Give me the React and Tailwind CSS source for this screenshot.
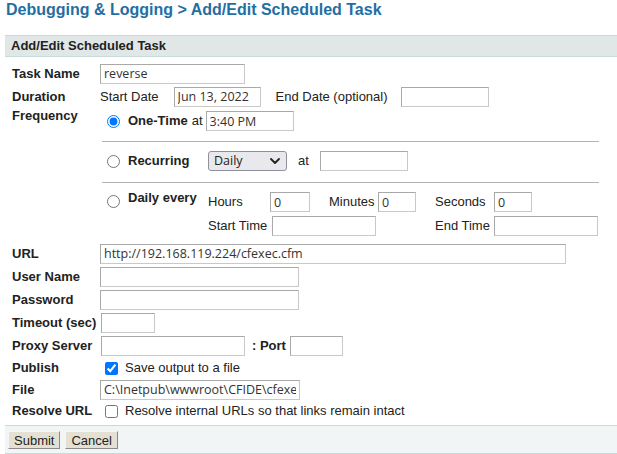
import React from 'react';

// Scheduled task editor form (ColdFusion admin style)
const Label = ({ children }) => (
  <div className="w-[95px] shrink-0 pl-[7px] font-bold text-[#222]">{children}</div>
);

const Field = ({ w, value = '', className = '' }) => (
  <input
    readOnly
    value={value}
    className={`h-[20px] ${w} shrink-0 border border-[#a9a9a9] border-r-[#c9c9c9] border-b-[#c9c9c9] bg-white px-[3px] font-['Open_Sans',sans-serif] text-[12.5px] text-[#333] outline-none ${className}`}
  />
);

const Radio = ({ checked = false }) => (
  <input type="radio" name="freq" defaultChecked={checked} className="mt-[1px] ml-[7px] h-[13px] w-[13px] shrink-0" />
);

const Row = ({ h = 'h-[23px]', children }) => (
  <div className={`flex ${h} items-center`}>{children}</div>
);

const Chevron = () => (
  <svg width="10" height="6" viewBox="0 0 10 6" fill="none">
    <path d="M1 1 L5 5 L9 1" stroke="#222" strokeWidth="1.8" strokeLinecap="round" strokeLinejoin="round" />
  </svg>
);

const App = () => {
  return (
    <div className="h-[454px] w-[617px] overflow-hidden bg-white font-['Liberation_Sans',Arial,sans-serif] text-[13px] text-[#222]">
      <h1 className="pl-[6px] text-[16px] leading-[20px] font-bold text-[#1f6fa3]">
        Debugging &amp; Logging &gt; Add/Edit Scheduled Task
      </h1>

      {/* Section header */}
      <div className="mt-[15px] ml-[5px] flex h-[22px] items-center border-y border-[#c4dbd7] bg-[#e1e6e6] pl-[6px] font-bold">
        Add/Edit Scheduled Task
      </div>

      <div className="ml-[5px] pt-[5px]">
        <Row>
          <Label>Task Name</Label>
          <Field w="w-[145px]" value="reverse" />
        </Row>

        <Row>
          <Label>Duration</Label>
          <span>Start Date</span>
          <Field w="w-[87px]" value="Jun 13, 2022" className="ml-[15px]" />
          <span className="ml-[15px]">End Date (optional)</span>
          <Field w="w-[88px]" className="ml-[13px]" />
        </Row>

        {/* Frequency block */}
        <div className="flex h-[134px]">
          <div className="w-[95px] shrink-0 pl-[7px] leading-[16px] font-bold">Frequency</div>
          <div className="w-[500px] pt-[2px]">
            <div className="flex h-[22px] items-center">
              <Radio checked />
              <span className="ml-[8px] font-bold">One-Time</span>
              <span className="ml-[4px]">at</span>
              <Field w="w-[88px]" value="3:40 PM" className="ml-[3px]" />
            </div>

            <div className="mt-[9px] ml-[2px] w-[497px] border-t border-[#b3b3b3]" />

            <div className="mt-[8px] flex h-[22px] items-center">
              <div className="flex w-[108px] shrink-0 items-center">
                <Radio />
                <span className="ml-[8px] font-bold">Recurring</span>
              </div>
              <div className="flex h-[20px] w-[79px] items-center justify-between rounded-[3px] border border-[#8f8f9d] bg-[#e9e9ed] pr-[6px] pl-[5px] font-['Open_Sans',sans-serif] text-[12.5px] text-[#222]">
                <span>Daily</span>
                <Chevron />
              </div>
              <span className="ml-[11px]">at</span>
              <Field w="w-[88px]" className="ml-[11px]" />
            </div>

            <div className="mt-[10px] ml-[2px] w-[497px] border-t border-[#b3b3b3]" />

            <div className="mt-[8px] flex">
              <div className="flex w-[108px] shrink-0 items-start">
                <input type="radio" name="freq" className="mt-[4px] ml-[7px] h-[13px] w-[13px] shrink-0" />
                <span className="ml-[8px] leading-[14px] font-bold">Daily every</span>
              </div>
              <div>
                <div className="flex h-[22px] items-center">
                  <span className="w-[62px] shrink-0">Hours</span>
                  <Field w="w-[40px]" value="0" />
                  <span className="ml-[19px] w-[49px] shrink-0">Minutes</span>
                  <Field w="w-[38px]" value="0" />
                  <span className="ml-[19px] w-[59px] shrink-0">Seconds</span>
                  <Field w="w-[38px]" value="0" />
                </div>
                <div className="mt-[2px] flex h-[22px] items-center">
                  <span className="w-[64px] shrink-0">Start Time</span>
                  <Field w="w-[104px]" />
                  <span className="ml-[59px] w-[59px] shrink-0">End Time</span>
                  <Field w="w-[104px]" />
                </div>
              </div>
            </div>
          </div>
        </div>

        <Row>
          <Label>URL</Label>
          <Field w="w-[466px]" value="http://192.168.119.224/cfexec.cfm" />
        </Row>
        <Row>
          <Label>User Name</Label>
          <Field w="w-[199px]" />
        </Row>
        <Row>
          <Label>Password</Label>
          <Field w="w-[199px]" />
        </Row>
        <Row>
          <Label>Timeout (sec)</Label>
          <Field w="w-[54px]" className="ml-[1px]" />
        </Row>
        <Row>
          <Label>Proxy Server</Label>
          <Field w="w-[144px]" className="ml-[1px]" />
          <span className="ml-[7px] font-bold">: Port</span>
          <Field w="w-[53px]" className="ml-[4px]" />
        </Row>
        <Row h="h-[22px]">
          <Label>Publish</Label>
          <input type="checkbox" defaultChecked className="ml-[5px] h-[13px] w-[13px] shrink-0" />
          <span className="ml-[7px]">Save output to a file</span>
        </Row>
        <Row h="h-[21px]">
          <Label>File</Label>
          <Field w="w-[200px]" value="C:\Inetpub\wwwroot\CFIDE\cfexec.htm" />
        </Row>
        <Row h="h-[22px]">
          <Label>Resolve URL</Label>
          <input type="checkbox" className="ml-[5px] h-[13px] w-[13px] shrink-0" />
          <span className="ml-[7px]">Resolve internal URLs so that links remain intact</span>
        </Row>
      </div>

      {/* Button bar */}
      <div className="mt-[3px] ml-[5px] flex h-[29px] gap-[5px] border-y border-[#c4dbd7] bg-[#f1f5f5] pt-[5px] pl-[3px]">
        <button className="h-[18px] border border-t-[#f6f6f6] border-r-[#8a8a8a] border-b-[#8a8a8a] border-l-[#f6f6f6] bg-[#e4e1d4] px-[5px] text-[13px] leading-none text-[#222]">
          Submit
        </button>
        <button className="h-[18px] border border-t-[#f6f6f6] border-r-[#8a8a8a] border-b-[#8a8a8a] border-l-[#f6f6f6] bg-[#e4e1d4] px-[5px] text-[13px] leading-none text-[#222]">
          Cancel
        </button>
      </div>
    </div>
  );
};

export default App;
